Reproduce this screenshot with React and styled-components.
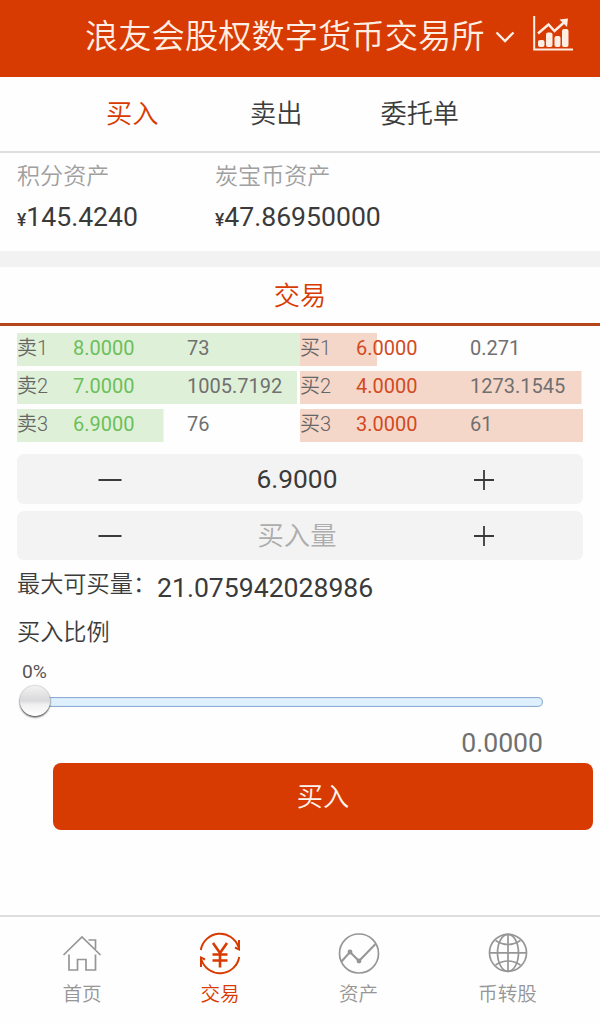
import React from "react";
import styled, { createGlobalStyle } from "styled-components";

const ORANGE = "#d83b01";

const GlobalStyle = createGlobalStyle`
  * { box-sizing: border-box; }
  body {
    margin: 0;
    background: #fefefe;
    color: #333;
    font-family: Roboto, "Noto Sans CJK SC", sans-serif;
    font-weight: 350;
  }
  button { font: inherit; color: inherit; border: 0; padding: 0; background: none; }
`;

const Page = styled.div`
  display: flex;
  flex-direction: column;
  width: 600px;
  height: 1025px;
  overflow: hidden;
`;

const Header = styled.header`
  display: flex;
  align-items: center;
  height: 77px;
  padding: 0 26px 3px 85px;
  background: ${ORANGE};
  color: #ffeee4;
`;

const Title = styled.h1`
  margin: 0;
  width: 400px;
  font-size: 33.3px;
  line-height: 48px;
  font-weight: 350;
  white-space: nowrap;
`;

const Chevron = styled.svg`
  margin: 0 0 1px 10px;
`;

const ChartIcon = styled.svg`
  margin: 0 0 7px auto;
`;

const Tabs = styled.nav`
  display: flex;
  height: 76px;
  padding-left: 106px;
  border-bottom: 2px solid #dedede;
  font-size: 26.2px;
  line-height: 72px;
`;

const Tab = styled.button`
  width: ${(p) => p.$width}px;
  text-align: left;
  color: ${(p) => (p.$active ? ORANGE : "#3c3c3c")};
`;

const Assets = styled.section`
  display: grid;
  grid-template-columns: 198px 1fr;
  height: 98px;
  padding: 8px 17px 0;
`;

const AssetLabel = styled.div`
  font-size: 23.1px;
  line-height: 32px;
  color: #a0a0a0;
`;

const AssetValue = styled.div`
  margin-top: 8px;
  font-size: 26.6px;
  line-height: 32px;
  font-weight: 400;
  color: #3a3a3a;
`;

const Yen = styled.span`
  font-size: 17.5px;
  font-weight: 500;
`;

const Band = styled.div`
  height: 16px;
  background: #f2f2f2;
`;

const SectionTitle = styled.h2`
  margin: 0;
  height: 59px;
  border-bottom: 3px solid #b5451b;
  text-align: center;
  font-size: 26.2px;
  line-height: 58px;
  font-weight: 350;
  color: ${ORANGE};
`;

const Book = styled.section`
  display: grid;
  grid-template-columns: 1fr 1fr;
  gap: 5px 0;
  padding: 7px 17px 0;
`;

const Order = styled.div`
  display: grid;
  grid-template-columns: 56px 114px 1fr;
  height: 33px;
  font-size: 20px;
  line-height: 30px;
  font-weight: 400;
  color: #707070;
  background: linear-gradient(${(p) => (p.$side === "sell" ? "#dff0d8, #dff0d8" : "#f5d7c9, #f5d7c9")})
    0 0 / ${(p) => p.$depth}px 100% no-repeat;
`;

const OrderName = styled.span`
  font-weight: 350;
  color: #666;
`;

const OrderPrice = styled.span`
  color: ${(p) => (p.$side === "sell" ? "#6cbf5a" : "#d24a22")};
`;

const Steppers = styled.section`
  display: flex;
  flex-direction: column;
  gap: 7px;
  padding: 12px 17px 0;
`;

const Stepper = styled.div`
  display: grid;
  grid-template-columns: 187px 1fr 193px;
  align-items: center;
  height: 49.5px;
  border-radius: 7px;
  background: #f3f3f3;
`;

const StepButton = styled.button`
  display: flex;
  justify-content: center;
  padding: ${(p) => (p.$plus ? "0 5px 0 0" : "0 2px 0 0")};
`;

const StepValue = styled.div`
  padding-top: 1px;
  text-align: center;
  font-size: 26.3px;
  line-height: 48px;
  font-weight: ${(p) => (p.$placeholder ? 350 : 400)};
  color: ${(p) => (p.$placeholder ? "#adadad" : "#3a3a3a")};
`;

const MaxRow = styled.div`
  display: flex;
  height: 49px;
  padding: 6px 17px 0;
`;

const Label = styled.div`
  font-size: 23.2px;
  line-height: 36px;
  color: #3c3c3c;
`;

const MaxLabel = styled(Label)`
  width: 140px;
  white-space: nowrap;
`;

const MaxValue = styled.div`
  padding-top: 4px;
  font-size: 26.6px;
  line-height: 36px;
  font-weight: 400;
  color: #3a3a3a;
`;

const Ratio = styled.section`
  display: flex;
  flex-direction: column;
  height: 154px;
  padding: 5px 57px 0 17px;
`;

const Percent = styled.div`
  margin: 10px 0 0 5px;
  font-size: 19.2px;
  line-height: 24px;
  font-weight: 400;
  color: #555;
`;

const Slider = styled.div`
  display: flex;
  align-items: center;
  height: 34px;
  padding-left: 3px;
`;

const Knob = styled.div`
  position: relative;
  z-index: 1;
  flex: none;
  width: 30px;
  height: 30px;
  border-radius: 50%;
  background: linear-gradient(#f2f2f2 0%, #d9d9db 48%, #f0f0f0 62%, #fff 100%);
  box-shadow: 0 1.5px 2px #555, 0 0 2px #888;
`;

const Track = styled.div`
  flex: 1;
  height: 10px;
  margin: 2px 0 0 -2px;
  border: 1px solid #8fadd2;
  border-left: 0;
  border-radius: 0 5px 5px 0;
  background: #def0fd;
  box-shadow: inset 0 0 1px #8fadd2;
`;

const Amount = styled.div`
  margin-top: 7px;
  text-align: right;
  font-size: 26.6px;
  line-height: 36px;
  font-weight: 400;
  color: #707070;
`;

const BuyButton = styled.button`
  flex: none;
  height: 67px;
  margin: 0 7px 0 53px;
  border-radius: 8px;
  background: ${ORANGE};
  color: #fff5ee;
  font-size: 26.2px;
  line-height: 68px;
`;

const BottomNav = styled.nav`
  display: flex;
  height: 110px;
  margin-top: auto;
  padding-left: 13px;
  border-top: 2px solid #dedede;
`;

const NavItem = styled.button`
  display: flex;
  flex-direction: column;
  align-items: center;
  justify-content: flex-start;
  width: ${(p) => p.$width}px;
  padding-top: 15px;
  font-size: 19.6px;
  line-height: 30px;
  color: ${(p) => (p.$active ? ORANGE : "#969696")};
`;

const NavIcon = styled.svg`
  width: 44px;
  height: 44px;
  margin-bottom: 4px;
  fill: none;
  stroke: currentColor;
  stroke-width: 1.7;
`;

const orders = [
  { side: "sell", name: "卖1", price: "8.0000", qty: "73", depth: 283 },
  { side: "buy", name: "买1", price: "6.0000", qty: "0.271", depth: 77 },
  { side: "sell", name: "卖2", price: "7.0000", qty: "1005.7192", depth: 280 },
  { side: "buy", name: "买2", price: "4.0000", qty: "1273.1545", depth: 281.5 },
  { side: "sell", name: "卖3", price: "6.9000", qty: "76", depth: 146.5 },
  { side: "buy", name: "买3", price: "3.0000", qty: "61", depth: 283 },
];

function StepperRow({ value, placeholder }) {
  return (
    <Stepper>
      <StepButton aria-label="减少">
        <svg width="24" height="24" stroke="#3a3a3a" strokeWidth="2">
          <path d="M0.5 13H23.5" />
        </svg>
      </StepButton>
      <StepValue $placeholder={placeholder}>{value}</StepValue>
      <StepButton $plus aria-label="增加">
        <svg width="24" height="24" stroke="#3a3a3a" strokeWidth="1.8">
          <path d="M2 13H22M12 3V23" />
        </svg>
      </StepButton>
    </Stepper>
  );
}

export default function App() {
  return (
    <Page>
      <GlobalStyle />
      <Header>
        <Title>浪友会股权数字货币交易所</Title>
        <Chevron width="20" height="14" fill="none" stroke="#ffeee4" strokeWidth="2.4">
          <path d="M1.5 2.5L10 11L18.5 2.5" />
        </Chevron>
        <ChartIcon width="41" height="36" fill="none" stroke="#ffeee4" strokeWidth="2">
          <path d="M1.2 0V33.5H40" />
          <path d="M5 17.5L15.5 8.5L21.5 15L32 5.5" strokeWidth="2.4" />
          <path d="M26.5 3.5L35 2.5L34 11Z" fill="#ffeee4" stroke="none" />
          <g fill="#ffeee4" stroke="none">
            <rect x="5" y="24" width="6.5" height="7" rx="2" />
            <rect x="13" y="16.5" width="6.5" height="14.5" rx="2" />
            <rect x="21.5" y="20" width="6" height="11" rx="2" />
            <rect x="29" y="13" width="6.5" height="18" rx="2" />
          </g>
        </ChartIcon>
      </Header>

      <Tabs>
        <Tab $width={144} $active>买入</Tab>
        <Tab $width={130.5}>卖出</Tab>
        <Tab $width={90}>委托单</Tab>
      </Tabs>

      <Assets>
        <div>
          <AssetLabel>积分资产</AssetLabel>
          <AssetValue><Yen>¥</Yen>145.4240</AssetValue>
        </div>
        <div>
          <AssetLabel>炭宝币资产</AssetLabel>
          <AssetValue><Yen>¥</Yen>47.86950000</AssetValue>
        </div>
      </Assets>

      <Band />
      <SectionTitle>交易</SectionTitle>

      <Book>
        {orders.map((o) => (
          <Order key={o.name} $side={o.side} $depth={o.depth}>
            <OrderName>{o.name}</OrderName>
            <OrderPrice $side={o.side}>{o.price}</OrderPrice>
            <span>{o.qty}</span>
          </Order>
        ))}
      </Book>

      <Steppers>
        <StepperRow value="6.9000" />
        <StepperRow value="买入量" placeholder />
      </Steppers>

      <MaxRow>
        <MaxLabel>最大可买量：</MaxLabel>
        <MaxValue>21.075942028986</MaxValue>
      </MaxRow>

      <Ratio>
        <Label>买入比例</Label>
        <Percent>0%</Percent>
        <Slider>
          <Knob />
          <Track />
        </Slider>
        <Amount>0.0000</Amount>
      </Ratio>

      <BuyButton>买入</BuyButton>

      <BottomNav>
        <NavItem $width={138}>
          <NavIcon viewBox="0 0 44 44">
            <path d="M3.5 23L22 5L40.5 23" />
            <path d="M28.5 8H35.5V17" />
            <path d="M9 22.5V38H17.5V27.5H26V38H35.5V22.5" />
          </NavIcon>
          首页
        </NavItem>
        <NavItem $width={138} $active>
          <NavIcon viewBox="0 0 44 44">
            <g strokeWidth="2">
              <path d="M2.8 18A19.5 19.5 0 0 1 40.5 15" />
              <path d="M41.2 25A19.5 19.5 0 0 1 3.5 28" />
              <path d="M41 8V17.5L37 15.5" />
              <path d="M3 35V25.5L7 27.5" />
            </g>
            <path d="M15 11L22 21L29 11M22 21V35.5M14.5 22.5H29.5M14.5 28.5H29.5" strokeWidth="2.6" />
          </NavIcon>
          交易
        </NavItem>
        <NavItem $width={139}>
          <NavIcon viewBox="0 0 44 44">
            <circle cx="22" cy="21.5" r="19.5" />
            <path d="M4.5 29.5L13 20L22 29L38.5 12" strokeWidth="2" />
            <circle cx="13" cy="20" r="1.6" fill="currentColor" />
            <circle cx="22" cy="29" r="1.6" fill="currentColor" />
          </NavIcon>
          资产
        </NavItem>
        <NavItem $width={159}>
          <NavIcon viewBox="0 0 44 44">
            <circle cx="22" cy="20.8" r="18.5" />
            <ellipse cx="22" cy="20.8" rx="10.5" ry="18.5" />
            <path d="M22 2.3V39.3M3.5 20.8H40.5" />
            <path d="M9.5 8.5Q22 16.5 34.5 8.5M9.5 33Q22 25 34.5 33" />
          </NavIcon>
          币转股
        </NavItem>
      </BottomNav>
    </Page>
  );
}
